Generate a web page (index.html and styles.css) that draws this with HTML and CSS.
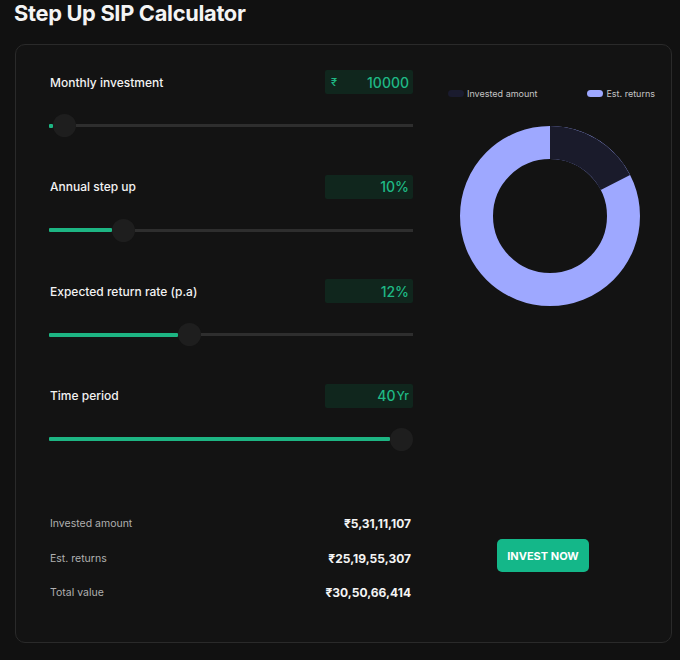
FILE: index.html
```html
<!DOCTYPE html>
<html>
<head>
<meta charset="utf-8">
<link rel="stylesheet" href="styles.css">
</head>
<body>
<h1 class="title">Step Up SIP Calculator</h1>
<div class="card">
  <div class="left">
    <div class="row">
      <div class="head">
        <span class="label">Monthly investment</span>
        <span class="box box-money"><span class="cur">₹</span><span class="val">10000</span></span>
      </div>
      <div class="slider">
        <div class="fill" style="width:4px"></div>
        <div class="thumb"></div>
        <div class="track"></div>
      </div>
    </div>
    <div class="row">
      <div class="head">
        <span class="label">Annual step up</span>
        <span class="box"><span class="val">10%</span></span>
      </div>
      <div class="slider">
        <div class="fill" style="width:63px"></div>
        <div class="thumb"></div>
        <div class="track"></div>
      </div>
    </div>
    <div class="row">
      <div class="head">
        <span class="label">Expected return rate (p.a)</span>
        <span class="box"><span class="val">12%</span></span>
      </div>
      <div class="slider">
        <div class="fill" style="width:129px"></div>
        <div class="thumb"></div>
        <div class="track"></div>
      </div>
    </div>
    <div class="row">
      <div class="head">
        <span class="label">Time period</span>
        <span class="box"><span class="val">40</span><span class="unit">Yr</span></span>
      </div>
      <div class="slider">
        <div class="fill" style="width:341px"></div>
        <div class="thumb"></div>
        <div class="track"></div>
      </div>
    </div>
    <div class="results">
      <div class="res"><span class="rl">Invested amount</span><span class="rv">₹5,31,11,107</span></div>
      <div class="res"><span class="rl">Est. returns</span><span class="rv">₹25,19,55,307</span></div>
      <div class="res"><span class="rl">Total value</span><span class="rv">₹30,50,66,414</span></div>
    </div>
  </div>
  <div class="right">
    <div class="legend">
      <span class="lg"><span class="sw sw-inv"></span>Invested amount</span>
      <span class="lg"><span class="sw sw-ret"></span>Est. returns</span>
    </div>
    <svg class="donut" width="180" height="180" viewBox="0 0 180 180">
      <circle cx="90" cy="90" r="73.5" fill="none" stroke="#9ea8ff" stroke-width="33"/>
      <circle cx="90" cy="90" r="73.5" fill="none" stroke="#1a1b2b" stroke-width="33" stroke-dasharray="80.4 461.8" transform="rotate(-90 90 90)"/>
    </svg>
    <button class="btn">INVEST NOW</button>
  </div>
</div>
</body>
</html>
```
FILE: styles.css
```css
* { box-sizing: border-box; }
html, body { margin: 0; padding: 0; background: #111111; }
body {
  font-family: "Inter", "Liberation Sans", sans-serif;
  color: #f0f0f0;
  width: 680px;
  height: 660px;
  overflow: hidden;
}
.title {
  margin: 0;
  padding-left: 14px;
  font-size: 21.8px;
  font-weight: 700;
  line-height: 26px;
  letter-spacing: -0.3px;
  color: #f4f4f4;
}
.card {
  margin: 18px 0 0 15px;
  width: 657px;
  height: 599px;
  border: 1px solid #2a2a2a;
  border-radius: 10px;
  background: #131313;
  padding: 25px 16px 0 33px;
  display: flex;
  gap: 35px;
}
.left { width: 364px; display: flex; flex-direction: column; }
.row { margin-bottom: 37.5px; }
.head {
  height: 24px;
  display: flex;
  align-items: center;
  justify-content: space-between;
  margin-bottom: 20px;
}
.label { font-size: 12px; font-weight: 500; color: #f2f2f2; padding-left: 1px; }
.box {
  width: 88px;
  height: 24px;
  background: #10261d;
  border-radius: 2px;
  display: flex;
  align-items: center;
  justify-content: flex-end;
  padding: 0 4px 0 6px;
  color: #1fb985;
  font-size: 14px;
  font-weight: 500;
}
.box-money { justify-content: space-between; }
.cur { font-size: 11px; }
.unit { font-size: 12px; margin-left: 1px; }
.slider {
  height: 23px;
  display: flex;
  align-items: center;
}
.fill { height: 4px; background: #1db583; border-radius: 1px; }
.thumb {
  width: 23px;
  height: 23px;
  border-radius: 50%;
  background: #1e1e1e;
  flex: none;
}
.track { flex: 1; height: 3px; background: #2e2e2e; }
.results { margin-top: 25.5px; display: flex; flex-direction: column; gap: 14.5px; }
.res {
  height: 20px;
  display: flex;
  align-items: center;
  justify-content: space-between;
  padding-right: 2px;
}
.rl { font-size: 10.5px; color: #b0b0b0; padding-left: 1px; }
.rv { font-size: 12px; font-weight: 700; color: #f4f4f4; }
.right { width: 208px; display: flex; flex-direction: column; }
.legend {
  margin-top: 16px;
  height: 14px;
  display: flex;
  align-items: center;
  justify-content: space-between;
}
.lg { display: flex; align-items: center; gap: 3px; font-size: 9px; color: #c4c4c4; }
.sw { width: 16px; height: 7px; border-radius: 4px; display: inline-block; }
.sw-inv { background: #1a1b2e; }
.sw-ret { background: #9ea8ff; }
.donut { margin: 26px 0 0 12px; display: block; }
.btn {
  margin: 233px 0 0 49px;
  width: 92px;
  height: 33px;
  border: none;
  border-radius: 5px;
  background: #14b789;
  color: #ffffff;
  font-family: "Inter", "Liberation Sans", sans-serif;
  font-size: 11px;
  font-weight: 700;
  padding: 0;
}
```
